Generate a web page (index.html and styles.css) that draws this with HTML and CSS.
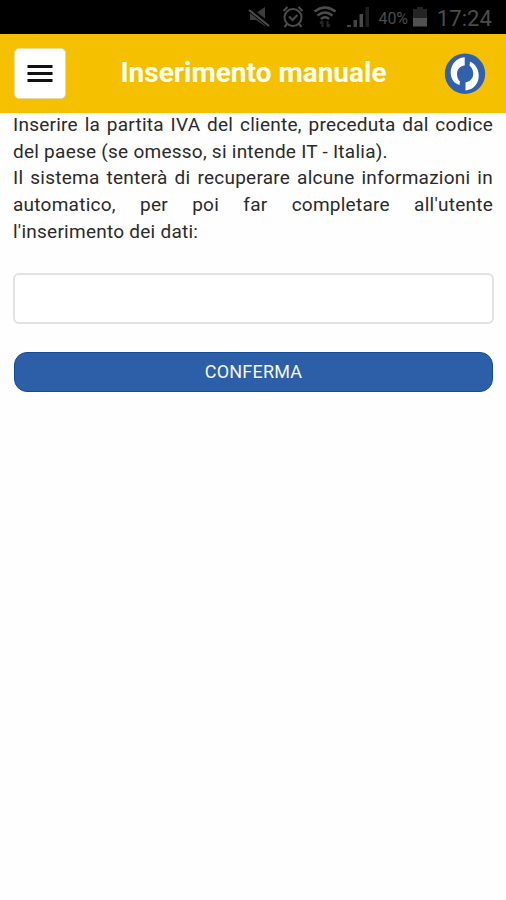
FILE: index.html
```html
<!DOCTYPE html>
<html lang="it">
<head>
  <meta charset="UTF-8">
  <meta name="viewport" content="width=device-width, initial-scale=1.0">
  <title>Inserimento manuale</title>
  <link rel="stylesheet" href="styles.css">
</head>
<body>
  <div class="statusbar">
    <svg class="icon-mute" width="22" height="22" viewBox="0 0 22 22">
      <path d="M2 7h6l9-6v19l-9-6H2z" fill="#3c3c3c"/>
      <path d="M1 3l20 16" stroke="#000" stroke-width="5"/>
      <path d="M1 4l20 16" stroke="#4c4c4c" stroke-width="2"/>
    </svg>
    <svg class="icon-alarm" width="22" height="24" viewBox="0 0 22 24" fill="none" stroke="#4c4c4c" stroke-width="2">
      <circle cx="11" cy="12.500" r="8.500"/>
      <path d="M7 11.500l3.500 3.500 5-5M1.500 6l4-4M20.500 6l-4-4M5 19l-2.500 3M17 19l2.500 3"/>
    </svg>
    <svg class="icon-wifi" width="24" height="24" viewBox="0 0 24 24" fill="none" stroke="#4c4c4c" stroke-width="2.600">
      <path d="M1.500 6.500q10.500-8 21 0M4.500 10.500q7.500-6 15 0M8 14q4-3.500 8 0"/>
      <path d="M9.500 22v-6M7 18.500l2.500-2.500M14.500 16v6M17 19.500l-2.500 2.500" stroke="#262626" stroke-width="2"/>
    </svg>
    <svg class="icon-signal" width="24" height="22" viewBox="0 0 24 22">
      <path d="M0 19h4v2H0zM6.500 14h3.500v7H6.500z" fill="#444"/>
      <path d="M12.500 8H16v13h-3.500z" fill="#4c4c4c"/>
      <path d="M18.500 1H22v20h-3.500z" fill="#202020"/>
    </svg>
    <span class="battery-text">40%</span>
    <svg class="icon-battery" width="16" height="22" viewBox="0 0 16 22">
      <path d="M5 1h6v2h4v9H1V3h4z" fill="#242424"/>
      <path d="M1 12h14v8.500H1z" fill="#505050"/>
    </svg>
    <span class="clock">17:24</span>
  </div>

  <div class="navbar">
    <button class="menu-toggle" aria-label="Menu">
      <svg width="26" height="20" viewBox="0 0 26 20" stroke="#111" stroke-width="2.800">
        <path d="M0.500 2.500h25M0.500 9.500h25M0.500 16.500h25"/>
      </svg>
    </button>
    <h1>Inserimento manuale</h1>
    <button class="refresh-button" aria-label="Aggiorna">
      <svg width="42" height="42" viewBox="0 0 42 42">
        <circle cx="21" cy="20.700" r="20.200" fill="#3161ae"/>
        <path d="M20.700 4.300C11 5 6.500 13 6.700 20C7 26 10 30.500 15.500 32L16 28.500C11.500 24 11.500 13.500 20.700 12.500z" fill="#fff"/>
        <path d="M21.500 37.500C31 36.500 35 29 34.700 22C34.500 15.500 31 10.500 26 8.700L25.500 12.500C31 17 31 28 21.500 29.500z" fill="#fff"/>
      </svg>
    </button>
  </div>

  <div class="content">
    <p>Inserire la partita IVA del cliente, preceduta dal codice del paese (se omesso, si intende IT - Italia).</p>
    <p>Il sistema tenterà di recuperare alcune informazioni in automatico, per poi far completare all'utente l'inserimento dei dati:</p>
    <input class="vat-input" type="text" aria-label="Partita IVA">
    <button class="submit-button">CONFERMA</button>
  </div>
</body>
</html>
```

FILE: styles.css
```css
:root {
  --bg-main: #fefefe;
  --yellow: #f4c000;
  --blue: #2d5fa8;
  --blue-dark: #0e4b9a;
  --border-color: #e2e2e2;
  --status-text: #4c4c4c;
}

* {
  box-sizing: border-box;
  margin: 0;
  padding: 0;
}

body {
  font-family: Roboto, 'Liberation Sans', sans-serif;
  background-color: var(--bg-main);
  color: #2a2a2a;
}

.statusbar {
  display: flex;
  align-items: center;
  justify-content: flex-end;
  height: 34px;
  padding-right: 14px;
  background-color: #000;
  color: var(--status-text);
}

.icon-alarm {
  margin-left: 12px;
}

.icon-wifi {
  margin-left: 9px;
}

.icon-signal {
  margin-left: 10px;
}

.battery-text {
  margin: 2px 0 0 8px;
  font-size: 16px;
  letter-spacing: -0.2px;
}

.icon-battery {
  margin-left: 4px;
}

.clock {
  margin: 3px 0 0 9px;
  font-size: 22px;
  letter-spacing: 0.1px;
}

.navbar {
  display: flex;
  align-items: center;
  justify-content: space-between;
  height: 79px;
  padding: 0 20px 0 14px;
  background-color: var(--yellow);
}

.menu-toggle {
  display: flex;
  align-items: center;
  justify-content: center;
  width: 52px;
  height: 51px;
  background-color: #fff;
  border: 1px solid #ead9a0;
  border-radius: 5px;
  cursor: pointer;
}

.navbar h1 {
  color: #fffef5;
  font-size: 28px;
  font-weight: 700;
  line-height: 32px;
  margin: 0 3px 2px 0;
}

.refresh-button {
  display: flex;
  background: none;
  border: none;
  cursor: pointer;
}

.content {
  margin-top: -1px;
  padding: 0 12px 0 13px;
}

.content p {
  padding-right: 1px;
  font-size: 19px;
  font-weight: 400;
  line-height: 26.7px;
  letter-spacing: 0.25px;
  text-align: justify;
}

.vat-input {
  display: block;
  width: 100%;
  height: 51px;
  margin-top: 27px;
  padding: 0 12px;
  background-color: #fff;
  border: 2px solid var(--border-color);
  border-radius: 6px;
  font-size: 19px;
}

.submit-button {
  display: block;
  width: calc(100% - 2px);
  height: 40px;
  margin: 28px 1px 0;
  padding-bottom: 1px;
  background-color: var(--blue);
  color: #f4f7ff;
  border: 1px solid var(--blue-dark);
  border-radius: 13px;
  font-family: inherit;
  font-size: 18px;
  letter-spacing: 0.2px;
  cursor: pointer;
}
```
